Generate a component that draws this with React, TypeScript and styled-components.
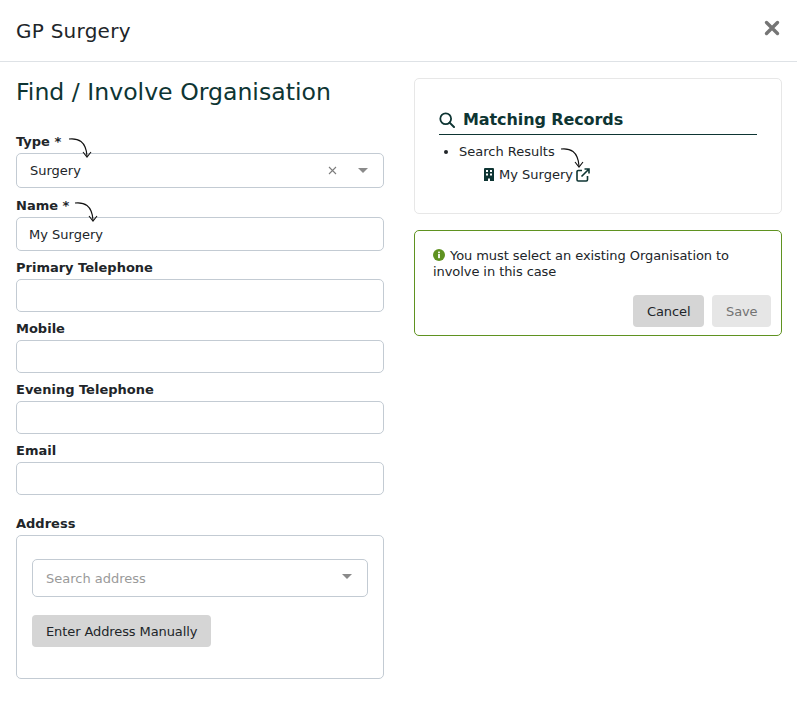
import { createGlobalStyle } from "styled-components";
import styled from "styled-components";

const GlobalStyle = createGlobalStyle`
  html, body {
    margin: 0;
    padding: 0;
    background: #fff;
    font-family: "DejaVu Sans", Verdana, sans-serif;
    color: #212529;
  }
`;

const Modal = styled.div`
  width: 797px;
  height: 712px;
  overflow: hidden;
  background: #fff;
`;

const Header = styled.header`
  box-sizing: border-box;
  height: 62px;
  display: flex;
  align-items: center;
  justify-content: space-between;
  padding: 0 16px;
  border-bottom: 1px solid #dee2e6;
`;

const Title = styled.h1`
  margin: 0;
  font-size: 20px;
  letter-spacing: 0.25px;
  font-weight: 400;
  color: #212529;
`;

const CloseButton = styled.button`
  display: flex;
  margin: 0 1px 6px 0;
  padding: 0;
  border: 0;
  background: none;
`;

const Body = styled.div`
  display: grid;
  grid-template-columns: 368px 368px;
  column-gap: 30px;
  padding: 16px 15px 0 16px;
`;

const Column = styled.div`
  display: flex;
  flex-direction: column;
`;

const FormHeading = styled.h2`
  margin: 0 0 28px;
  font-size: 23.6px;
  line-height: 28px;
  font-weight: 400;
  color: #0e3533;
`;

const Field = styled.div<{ $gap?: number }>`
  position: relative;
  margin-bottom: ${({ $gap }) => $gap ?? 9}px;
`;

const Label = styled.label`
  display: block;
  height: 16px;
  margin-bottom: 3px;
  font-size: 13px;
  line-height: 16px;
  font-weight: 700;
  color: #212529;
`;

const Control = styled.div<{ $height?: number; $inset?: number }>`
  box-sizing: border-box;
  display: flex;
  align-items: center;
  height: ${({ $height }) => $height ?? 33}px;
  padding: 0 12px 0 ${({ $inset }) => $inset ?? 12}px;
  border: 1px solid #c3cbd3;
  border-radius: 5px;
  background: #fff;
  font-size: 13px;
  color: #212529;
`;

const ControlText = styled.span<{ $muted?: boolean }>`
  flex: 1;
  color: ${({ $muted }) => ($muted ? "#9a9a9a" : "#212529")};
`;

const Caret = styled.span<{ $raised?: boolean }>`
  width: 0;
  height: 0;
  margin: ${({ $raised }) => ($raised ? "-4px 3px 0 0" : "0 3px 0 0")};
  border-left: 5px solid transparent;
  border-right: 5px solid transparent;
  border-top: 5px solid #8a8a8a;
`;

const ClearIcon = styled.svg`
  margin-right: 21px;
`;

const Arrow = styled.svg<{ $left: number; $top: number }>`
  position: absolute;
  left: ${({ $left }) => $left}px;
  top: ${({ $top }) => $top}px;
  pointer-events: none;
`;

const AddressField = styled.div`
  margin-top: 12px;
`;

const AddressBox = styled.div`
  box-sizing: border-box;
  height: 144px;
  padding: 23px 15px 0;
  border: 1px solid #c3cbd3;
  border-radius: 5px;
`;

const GreyButton = styled.button<{ $disabled?: boolean }>`
  height: 32px;
  padding: 0 ${({ $disabled }) => ($disabled ? 13.5 : 14)}px;
  border: 0;
  border-radius: 4px;
  background: ${({ $disabled }) => ($disabled ? "#e6e6e6" : "#d5d5d5")};
  color: ${({ $disabled }) => ($disabled ? "#737373" : "#212529")};
  font-family: inherit;
  font-size: 13px;
  letter-spacing: -0.1px;
`;

const ManualButton = styled(GreyButton)`
  margin-top: 18px;
`;

const Card = styled.section`
  position: relative;
  box-sizing: border-box;
  height: 136px;
  padding: 27px 24px 0;
  border: 1px solid #e7e7e7;
  border-radius: 5px;
`;

const CardHeading = styled.h3`
  display: flex;
  align-items: center;
  gap: 8px;
  height: 27px;
  margin: 0;
  padding-bottom: 1px;
  border-bottom: 1px solid #0e3533;
  font-size: 16px;
  letter-spacing: -0.1px;
  font-weight: 700;
  color: #0e3533;
`;

const ResultList = styled.ul`
  margin: 8px 0 0;
  padding-left: 20px;
  font-size: 13px;
  line-height: 17px;
`;

const ResultRow = styled.div`
  display: flex;
  align-items: center;
  gap: 5px;
  margin: 6px 0 0 25px;
`;

const ExternalIcon = styled.svg`
  margin-left: -2px;
`;

const Alert = styled.section`
  box-sizing: border-box;
  height: 106px;
  margin-top: 16px;
  padding: 17px 10px 0 18px;
  border: 1px solid #5f9220;
  border-radius: 5px;
`;

const AlertText = styled.p`
  margin: 0;
  font-size: 13px;
  letter-spacing: -0.07px;
  line-height: 16px;
  color: #212529;
`;

const AlertIcon = styled.svg`
  margin-right: 5px;
  vertical-align: -1px;
`;

const Actions = styled.div`
  display: flex;
  justify-content: flex-end;
  gap: 8px;
  margin-top: 15px;
`;

const CurvedArrow = ({ left, top }: { left: number; top: number }) => (
  <Arrow $left={left} $top={top} width="26" height="26" viewBox="0 0 26 26" fill="none">
    <path d="M1 3C10 2 18 5 19 20" stroke="#111" strokeWidth="1.1" />
    <path d="M15 16L19 21L23 16" stroke="#111" strokeWidth="1.1" />
  </Arrow>
);

const TextField = ({ label, value }: { label: string; value?: string }) => (
  <Field>
    <Label>{label}</Label>
    <Control>
      <ControlText>{value}</ControlText>
    </Control>
  </Field>
);

const App = () => (
  <Modal>
    <GlobalStyle />
    <Header>
      <Title>GP Surgery</Title>
      <CloseButton aria-label="Close">
        <svg width="16" height="16" viewBox="0 0 16 16">
          <path d="M2.5 2.5L13.5 13.5M13.5 2.5L2.5 13.5" stroke="#757575" strokeWidth="3.4" strokeLinecap="round" />
        </svg>
      </CloseButton>
    </Header>
    <Body>
      <Column>
        <FormHeading>Find / Involve Organisation</FormHeading>
        <Field $gap={10}>
          <Label>Type *</Label>
          <Control $height={35} $inset={13}>
            <ControlText>Surgery</ControlText>
            <ClearIcon width="9" height="9" viewBox="0 0 9 9">
              <path d="M1 1L8 8M8 1L1 8" stroke="#7d7d7d" strokeWidth="1.1" />
            </ClearIcon>
            <Caret />
          </Control>
          <CurvedArrow left={52} top={2} />
        </Field>
        <Field>
          <Label>Name *</Label>
          <Control $height={34}>
            <ControlText>My Surgery</ControlText>
          </Control>
          <CurvedArrow left={58} top={2} />
        </Field>
        <TextField label="Primary Telephone" />
        <TextField label="Mobile" />
        <TextField label="Evening Telephone" />
        <TextField label="Email" />
        <AddressField>
          <Label>Address</Label>
          <AddressBox>
            <Control $height={38} $inset={13}>
              <ControlText $muted>Search address</ControlText>
              <Caret $raised />
            </Control>
            <ManualButton>Enter Address Manually</ManualButton>
          </AddressBox>
        </AddressField>
      </Column>
      <Column>
        <Card>
          <CardHeading>
            <svg width="16" height="16" viewBox="0 0 16 16" fill="none">
              <circle cx="6.7" cy="6.7" r="5.4" stroke="#0e3533" strokeWidth="1.8" />
              <path d="M10.6 10.6L15 15" stroke="#0e3533" strokeWidth="2" strokeLinecap="round" />
            </svg>
            Matching Records
          </CardHeading>
          <ResultList>
            <li>
              Search Results
              <ResultRow>
                <svg width="10" height="13" viewBox="0 0 10 13">
                  <path
                    fillRule="evenodd"
                    d="M1 0H9A1 1 0 0 1 10 1V13H6V10.5H4V13H0V1A1 1 0 0 1 1 0ZM2 2V4H4V2ZM6 2V4H8V2ZM2 5.5V7.5H4V5.5ZM6 5.5V7.5H8V5.5Z"
                    fill="#0e3533"
                  />
                </svg>
                My Surgery
                <ExternalIcon width="14" height="14" viewBox="0 0 14 14" fill="none">
                  <path d="M6 2.5H2.2A1.2 1.2 0 0 0 1 3.7V11.8A1.2 1.2 0 0 0 2.2 13H10.3A1.2 1.2 0 0 0 11.5 11.8V8" stroke="#0e3533" strokeWidth="1.6" />
                  <path d="M5.5 8.5L12.5 1.5M8.5 1H13V5.5" stroke="#0e3533" strokeWidth="1.6" />
                </ExternalIcon>
              </ResultRow>
            </li>
          </ResultList>
          <CurvedArrow left={145} top={67} />
        </Card>
        <Alert>
          <AlertText>
            <AlertIcon width="12" height="12" viewBox="0 0 12 12">
              <circle cx="6" cy="6" r="6" fill="#5f9220" />
              <rect x="5.1" y="5" width="1.8" height="4.2" fill="#fff" />
              <rect x="5.1" y="2.6" width="1.8" height="1.6" fill="#fff" />
            </AlertIcon>
            You must select an existing Organisation to involve in this case
          </AlertText>
          <Actions>
            <GreyButton>Cancel</GreyButton>
            <GreyButton $disabled>Save</GreyButton>
          </Actions>
        </Alert>
      </Column>
    </Body>
  </Modal>
);

export default App;
